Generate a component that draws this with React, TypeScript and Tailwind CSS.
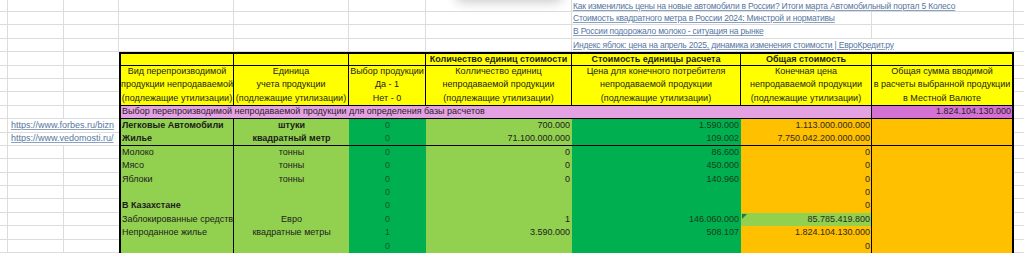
import React from "react";

type Row = {
  name: string;
  unit: string;
  sel: string;
  qty: string;
  price: string;
  total: string;
  bold?: boolean;
  divider?: boolean;
  flagged?: boolean;
};

const rows: Row[] = [
  { name: "Легковые Автомобили", unit: "штуки", sel: "0", qty: "700.000", price: "1.590.000", total: "1.113.000.000.000", bold: true },
  { name: "Жилье", unit: "квадратный метр", sel: "0", qty: "71.100.000.000", price: "109.002", total: "7.750.042.200.000.000", bold: true, divider: true },
  { name: "Молоко", unit: "тонны", sel: "0", qty: "0", price: "86.600", total: "0" },
  { name: "Мясо", unit: "тонны", sel: "0", qty: "0", price: "450.000", total: "0" },
  { name: "Яблоки", unit: "тонны", sel: "0", qty: "0", price: "140.960", total: "0" },
  { name: "", unit: "", sel: "0", qty: "", price: "", total: "0" },
  { name: "В Казахстане", unit: "", sel: "0", qty: "", price: "", total: "0", bold: true },
  { name: "Заблокированные средства", unit: "Евро", sel: "0", qty: "1", price: "146.060.000", total: "85.785.419.800", flagged: true },
  { name: "Непроданное жилье", unit: "квадратные метры", sel: "1", qty: "3.590.000", price: "508.107", total: "1.824.104.130.000" },
  { name: "", unit: "", sel: "0", qty: "", price: "", total: "0" },
];

// plain spreadsheet cell, only a grey grid line on the right
function Blank({ className = "" }: { className?: string }) {
  return <div className={`h-full shrink-0 border-r border-[#dcdcdc] ${className}`} />;
}

function Link({ children }: { children: React.ReactNode }) {
  return <span className="text-[#56769f] underline decoration-[#8aa0bd]">{children}</span>;
}

function HeadCell({ className = "", lines }: { className?: string; lines: string[] }) {
  return (
    <div className={`h-full shrink-0 flex flex-col items-center justify-center text-center leading-[13.4px] whitespace-nowrap overflow-hidden ${className}`}>
      {lines.map((l, i) => (
        <span key={i}>{l}</span>
      ))}
    </div>
  );
}

export default function App() {
  const leftRows = Array.from({ length: 15 }, (_, i) => i);

  return (
    <div className="relative w-[1024px] h-[253px] overflow-hidden bg-white font-['Liberation_Sans',Arial,sans-serif] text-[9px] text-[#1c1c1c]">
      {/* shadow of a popup hanging above the sheet */}
      <div className="absolute left-[455px] top-[-22px] w-[108px] h-[22px] rounded-lg bg-white shadow-[0_2px_12px_rgba(0,0,0,0.22)]" />

      {/* top rows with links */}
      <div className="flex h-[12px] border-b border-[#dcdcdc]">
        <Blank className="w-[8px]" />
        <Blank className="w-[56px]" />
        <Blank className="w-[55px]" />
        <Blank className="w-[115px]" />
        <Blank className="w-[115px]" />
        <Blank className="w-[77px]" />
        <Blank className="w-[146px]" />
        <div className="w-[442px] shrink-0 border-r border-[#dcdcdc] pl-[1px] leading-[12px] text-[8.5px] tracking-[-0.2px] whitespace-nowrap overflow-hidden">
          <Link>Как изменились цены на новые автомобили в России? Итоги марта Автомобильный портал 5 Колесо</Link>
        </div>
        <div className="w-[10px]" />
      </div>
      <div className="flex h-[13.4px] border-b border-[#dcdcdc]">
        <Blank className="w-[8px]" />
        <Blank className="w-[56px]" />
        <Blank className="w-[55px]" />
        <Blank className="w-[115px]" />
        <Blank className="w-[115px]" />
        <Blank className="w-[77px]" />
        <Blank className="w-[146px]" />
        <div className="w-[300px] shrink-0 border-r border-[#dcdcdc] pl-[1px] leading-[13px] text-[8.5px] tracking-[-0.2px] whitespace-nowrap overflow-hidden">
          <Link>Стоимость квадратного метра в России 2024: Минстрой и нормативы</Link>
        </div>
        <Blank className="w-[142px]" />
        <div className="w-[10px]" />
      </div>
      <div className="flex h-[13.4px] border-b border-[#dcdcdc]">
        <Blank className="w-[8px]" />
        <Blank className="w-[56px]" />
        <Blank className="w-[55px]" />
        <Blank className="w-[115px]" />
        <Blank className="w-[115px]" />
        <Blank className="w-[77px]" />
        <Blank className="w-[146px]" />
        <div className="w-[300px] shrink-0 border-r border-[#dcdcdc] pl-[1px] leading-[13px] text-[8.5px] tracking-[-0.2px] whitespace-nowrap overflow-hidden">
          <Link>В России подорожало молоко - ситуация на рынке</Link>
        </div>
        <Blank className="w-[142px]" />
        <div className="w-[10px]" />
      </div>
      <div className="flex h-[13.4px] border-b border-[#dcdcdc]">
        <Blank className="w-[8px]" />
        <Blank className="w-[56px]" />
        <Blank className="w-[55px]" />
        <Blank className="w-[115px]" />
        <Blank className="w-[115px]" />
        <Blank className="w-[77px]" />
        <Blank className="w-[146px]" />
        <div className="w-[442px] shrink-0 border-r border-[#dcdcdc] pl-[1px] leading-[13px] text-[8.5px] tracking-[-0.2px] whitespace-nowrap overflow-hidden">
          <Link>Индекс яблок: цена на апрель 2025, динамика изменения стоимости | ЕвроКредит.ру</Link>
        </div>
        <div className="w-[10px]" />
      </div>

      <div className="flex">
        {/* left sheet columns */}
        <div className="w-[119px] shrink-0">
          {leftRows.map((i) =>
            i === 5 || i === 6 ? (
              <div key={i} className="flex h-[13.4px] border-b border-[#dcdcdc]">
                <Blank className="w-[8px]" />
                <div className="w-[111px] shrink-0 pl-[3px] flex items-center whitespace-nowrap overflow-hidden">
                  <Link>{i === 5 ? "https://www.forbes.ru/bizn" : "https://www.vedomosti.ru/"}</Link>
                </div>
              </div>
            ) : (
              <div key={i} className="flex h-[13.4px] border-b border-[#dcdcdc]">
                <Blank className="w-[8px]" />
                <Blank className="w-[56px]" />
                <div className="w-[55px]" />
              </div>
            )
          )}
        </div>

        {/* the table */}
        <div className="w-[895px] shrink-0 border-x-2 border-t-2 border-black flex flex-col">
          <div className="flex h-[11.4px] border-b border-black bg-[#ffff00] font-bold">
            <div className="w-[113px] shrink-0 border-r border-black" />
            <div className="w-[115px] shrink-0 border-r border-black" />
            <div className="w-[77px] shrink-0 border-r border-black" />
            <div className="w-[146px] shrink-0 border-r border-black flex items-center justify-center whitespace-nowrap">Количество единиц стоимости</div>
            <div className="w-[169px] shrink-0 border-r border-black flex items-center justify-center whitespace-nowrap">Стоимость единицы расчета</div>
            <div className="w-[131px] shrink-0 border-r border-black flex items-center justify-center whitespace-nowrap">Общая стоимость</div>
            <div className="w-[140px] shrink-0" />
          </div>

          <div className="flex h-[40.2px] border-b border-black bg-[#ffff00]">
            <HeadCell className="w-[113px] border-r border-black" lines={["Вид перепроизводимой", "продукции непродаваемой", "(подлежащие утилизации)"]} />
            <HeadCell className="w-[115px] border-r border-black" lines={["Единица", "учета продукции", "(подлежащие утилизации)"]} />
            <HeadCell className="w-[77px] border-r border-black" lines={["Выбор продукции", "Да - 1", "Нет - 0"]} />
            <HeadCell className="w-[146px] border-r border-black" lines={["Колличество единиц", "непродаваемой продукции", "(подлежащие утилизации)"]} />
            <HeadCell className="w-[169px] border-r border-black" lines={["Цена для конечного потребителя", "непродаваемой продукции", "(подлежащие утилизации)"]} />
            <HeadCell className="w-[131px] border-r border-black" lines={["Конечная цена", "непродаваемой продукции", "(подлежащие утилизации)"]} />
            <HeadCell className="w-[140px]" lines={["Общая сумма вводимой", "в расчеты выбранной продукции", "в Местной Валюте"]} />
          </div>

          <div className="flex h-[13.4px] border-b border-black">
            <div className="w-[751px] shrink-0 border-r border-black bg-[#e4a2e2] pl-[1px] flex items-center whitespace-nowrap text-[#2b1d2b]">
              Выбор перепроизводимой непродаваемой продукции для определения базы расчетов
            </div>
            <div className="w-[140px] shrink-0 bg-[#d472d4] pr-[1px] flex items-center justify-end text-[#2b1d2b]">1.824.104.130.000</div>
          </div>

          {rows.map((r, i) => (
            <div key={i} className={`flex h-[13.4px] ${r.divider ? "border-b border-black" : ""}`}>
              <div className={`w-[113px] shrink-0 border-r border-black bg-[#92d050] pl-[1px] flex items-center whitespace-nowrap overflow-hidden ${r.bold ? "font-bold" : ""}`}>
                {r.name}
              </div>
              <div className={`w-[115px] shrink-0 bg-[#92d050] flex items-center justify-center whitespace-nowrap ${r.bold && r.unit ? "font-bold" : ""}`}>
                {r.unit}
              </div>
              <div className="w-[77px] shrink-0 bg-[#00b050] flex items-center justify-center text-[#0c5a1e]">{r.sel}</div>
              <div className="w-[146px] shrink-0 bg-[#92d050] pr-[2px] flex items-center justify-end">{r.qty}</div>
              <div className="w-[169px] shrink-0 bg-[#00b050] pr-[2px] flex items-center justify-end text-[#173d1c]">{r.price}</div>
              <div
                className={`relative w-[131px] shrink-0 border-r border-black pr-[1px] flex items-center justify-end ${
                  r.flagged ? "bg-[#92d050]" : "bg-[#ffc000]"
                } text-[#2e2a1e]`}
              >
                {r.flagged && (
                  <svg className="absolute left-[1px] top-[1px]" width="5" height="5" viewBox="0 0 5 5">
                    <path d="M0 0H5L0 5Z" fill="#1f7a36" />
                  </svg>
                )}
                {r.total}
              </div>
              <div className="w-[140px] shrink-0 bg-[#ffc000]" />
            </div>
          ))}
        </div>

        {/* right sheet column */}
        <div className="w-[10px] shrink-0">
          {leftRows.map((i) => (
            <div key={i} className="h-[13.4px] border-b border-[#dcdcdc]" />
          ))}
        </div>
      </div>
    </div>
  );
}
